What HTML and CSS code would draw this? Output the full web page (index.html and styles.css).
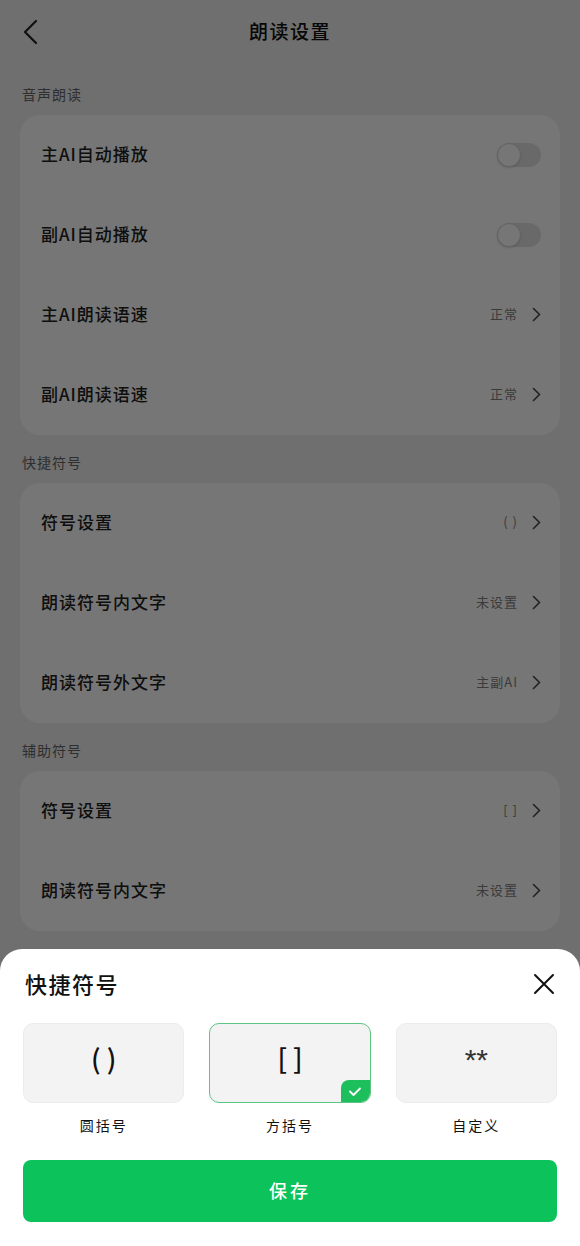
FILE: index.html
```html
<!DOCTYPE html>
<html lang="zh-CN">
<head>
<meta charset="utf-8">
<title>朗读设置</title>
<link rel="stylesheet" href="styles.css">
</head>
<body>
<div class="page">
  <header class="topbar">
    <span class="back">
      <svg width="16" height="26" viewBox="0 0 16 26"><path d="M14 2 L3 13 L14 24" fill="none" stroke="#222" stroke-width="2.2" stroke-linecap="round" stroke-linejoin="round"/></svg>
    </span>
    <h1 class="title">朗读设置</h1>
    <span class="back-spacer"></span>
  </header>

  <section class="group">
    <div class="group-title">音声朗读</div>
    <div class="card">
      <div class="row"><span class="label">主AI自动播放</span><span class="toggle"><span class="knob"></span></span></div>
      <div class="row"><span class="label">副AI自动播放</span><span class="toggle"><span class="knob"></span></span></div>
      <div class="row"><span class="label">主AI朗读语速</span><span class="right"><span class="value">正常</span><svg class="chev" width="9" height="15" viewBox="0 0 9 15"><path d="M1.5 1.5 L7.5 7.5 L1.5 13.5" fill="none" stroke="#4a4a4a" stroke-width="1.6" stroke-linecap="round" stroke-linejoin="round"/></svg></span></div>
      <div class="row"><span class="label">副AI朗读语速</span><span class="right"><span class="value">正常</span><svg class="chev" width="9" height="15" viewBox="0 0 9 15"><path d="M1.5 1.5 L7.5 7.5 L1.5 13.5" fill="none" stroke="#4a4a4a" stroke-width="1.6" stroke-linecap="round" stroke-linejoin="round"/></svg></span></div>
    </div>
  </section>

  <section class="group">
    <div class="group-title">快捷符号</div>
    <div class="card">
      <div class="row"><span class="label">符号设置</span><span class="right"><span class="value">( )</span><svg class="chev" width="9" height="15" viewBox="0 0 9 15"><path d="M1.5 1.5 L7.5 7.5 L1.5 13.5" fill="none" stroke="#4a4a4a" stroke-width="1.6" stroke-linecap="round" stroke-linejoin="round"/></svg></span></div>
      <div class="row"><span class="label">朗读符号内文字</span><span class="right"><span class="value">未设置</span><svg class="chev" width="9" height="15" viewBox="0 0 9 15"><path d="M1.5 1.5 L7.5 7.5 L1.5 13.5" fill="none" stroke="#4a4a4a" stroke-width="1.6" stroke-linecap="round" stroke-linejoin="round"/></svg></span></div>
      <div class="row"><span class="label">朗读符号外文字</span><span class="right"><span class="value">主副AI</span><svg class="chev" width="9" height="15" viewBox="0 0 9 15"><path d="M1.5 1.5 L7.5 7.5 L1.5 13.5" fill="none" stroke="#4a4a4a" stroke-width="1.6" stroke-linecap="round" stroke-linejoin="round"/></svg></span></div>
    </div>
  </section>

  <section class="group">
    <div class="group-title">辅助符号</div>
    <div class="card">
      <div class="row"><span class="label">符号设置</span><span class="right"><span class="value">[ ]</span><svg class="chev" width="9" height="15" viewBox="0 0 9 15"><path d="M1.5 1.5 L7.5 7.5 L1.5 13.5" fill="none" stroke="#4a4a4a" stroke-width="1.6" stroke-linecap="round" stroke-linejoin="round"/></svg></span></div>
      <div class="row"><span class="label">朗读符号内文字</span><span class="right"><span class="value">未设置</span><svg class="chev" width="9" height="15" viewBox="0 0 9 15"><path d="M1.5 1.5 L7.5 7.5 L1.5 13.5" fill="none" stroke="#4a4a4a" stroke-width="1.6" stroke-linecap="round" stroke-linejoin="round"/></svg></span></div>
    </div>
  </section>
</div>

<div class="mask"></div>

<div class="sheet">
  <div class="sheet-head">
    <h2 class="sheet-title">快捷符号</h2>
    <svg class="close" width="22" height="22" viewBox="0 0 22 22"><path d="M2 2 L20 20 M20 2 L2 20" fill="none" stroke="#111" stroke-width="2" stroke-linecap="round"/></svg>
  </div>
  <div class="options">
    <div class="option">
      <div class="opt-box"><span class="sym">()</span></div>
      <div class="opt-label">圆括号</div>
    </div>
    <div class="option">
      <div class="opt-box selected"><span class="sym">[]</span>
        <span class="badge"><svg width="14" height="11" viewBox="0 0 14 11"><path d="M2 5.5 L5.5 9 L12 2.5" fill="none" stroke="#fff" stroke-width="1.8" stroke-linecap="round" stroke-linejoin="round"/></svg></span>
      </div>
      <div class="opt-label">方括号</div>
    </div>
    <div class="option">
      <div class="opt-box"><span class="sym star">**</span></div>
      <div class="opt-label">自定义</div>
    </div>
  </div>
  <button class="save">保存</button>
</div>
</body>
</html>
```

FILE: styles.css
```css
* { box-sizing: border-box; }
html, body { margin: 0; padding: 0; }
body {
  width: 580px;
  height: 1246px;
  overflow: hidden;
  background: #f0f0f0;
  font-family: "Noto Sans CJK SC", "Noto Sans", sans-serif;
  color: #222;
}
.page { padding: 0 20px; }
.topbar {
  height: 64px;
  display: flex;
  align-items: center;
  justify-content: space-between;
}
.back { width: 40px; display: flex; align-items: center; padding-left: 2px; margin-top: 0; }
.back-spacer { width: 40px; }
.title {
  margin: 0 0 2px 0;
  font-size: 19px;
  line-height: 26px;
  font-weight: 500;
  letter-spacing: 1.5px;
  color: #111;
}
.group { margin-top: 20px; }
.group + .group { margin-top: 17px; }
.group-title {
  padding-left: 2px;
  font-size: 14px;
  line-height: 20px;
  color: #666;
  letter-spacing: 1px;
  margin-bottom: 11px;
}
.card {
  background: #fff;
  border-radius: 20px;
}
.row {
  height: 80px;
  display: flex;
  align-items: center;
  justify-content: space-between;
  padding: 0 19px 2px 21px;
}
.label {
  font-size: 17px;
  line-height: 24px;
  font-weight: 500;
  color: #222;
  letter-spacing: 1px;
}
.right { display: flex; align-items: center; gap: 14px; }
.value { font-size: 13px; line-height: 18px; color: #808080; letter-spacing: 1px; }
.chev { display: block; }
.toggle {
  width: 44px;
  height: 24px;
  border-radius: 12px;
  background: #e4e4e4;
  position: relative;
  margin-top: 2px;
}
.knob {
  position: absolute;
  left: 0;
  top: 0;
  width: 24px;
  height: 24px;
  border-radius: 50%;
  background: #fff;
  border: 1px solid #d6d6d6;
  box-shadow: 0 1px 2px rgba(0,0,0,0.15);
}
.mask {
  position: fixed;
  inset: 0;
  background: rgba(0, 0, 0, 0.537);
}
.sheet {
  position: fixed;
  left: 0;
  right: 0;
  bottom: 0;
  height: 297px;
  background: #fff;
  border-radius: 22px 22px 0 0;
  padding: 19px 23px 24px 23px;
  display: flex;
  flex-direction: column;
}
.sheet-head {
  display: flex;
  align-items: center;
  justify-content: space-between;
  height: 30px;
}
.sheet-title {
  margin: 0 0 0 2px;
  font-size: 22px;
  line-height: 30px;
  font-weight: 500;
  color: #111;
  letter-spacing: 1.5px;
}
.close { margin-right: 2px; margin-top: 2px; }
.options {
  margin-top: 25px;
  display: grid;
  grid-template-columns: repeat(3, 1fr);
  gap: 25px;
}
.opt-box {
  height: 80px;
  background: #f3f3f3;
  border-radius: 10px;
  border: 1px solid #ececec;
  display: flex;
  align-items: center;
  justify-content: center;
  padding-bottom: 10px;
  position: relative;
  overflow: hidden;
}
.opt-box.selected { border: 1px solid #5fc382; }
.sym { font-size: 27px; line-height: 32px; font-weight: 500; color: #111; letter-spacing: 6px; padding-left: 6px; }
.sym.star {
  font-family: "Liberation Sans", sans-serif;
  font-size: 30px;
  font-weight: 400;
  color: #333;
  letter-spacing: 0;
  padding-left: 0;
  padding-top: 4px;
}
.badge {
  position: absolute;
  right: 0;
  bottom: 0;
  width: 29px;
  height: 22px;
  background: #1cbf5b;
  border-radius: 8px 0 0 0;
  display: flex;
  align-items: center;
  justify-content: center;
}
.badge svg { display: block; }
.opt-label {
  margin-top: 12px;
  text-align: center;
  font-size: 14px;
  line-height: 20px;
  color: #111;
  letter-spacing: 2px;
}
.save {
  margin-top: 25px;
  height: 62px;
  width: 100%;
  border: none;
  border-radius: 8px;
  background: #0bc35a;
  color: #fff;
  font-family: "Noto Sans CJK SC", sans-serif;
  font-size: 18px;
  font-weight: 500;
  letter-spacing: 3px;
  padding-bottom: 3px;
}
```
